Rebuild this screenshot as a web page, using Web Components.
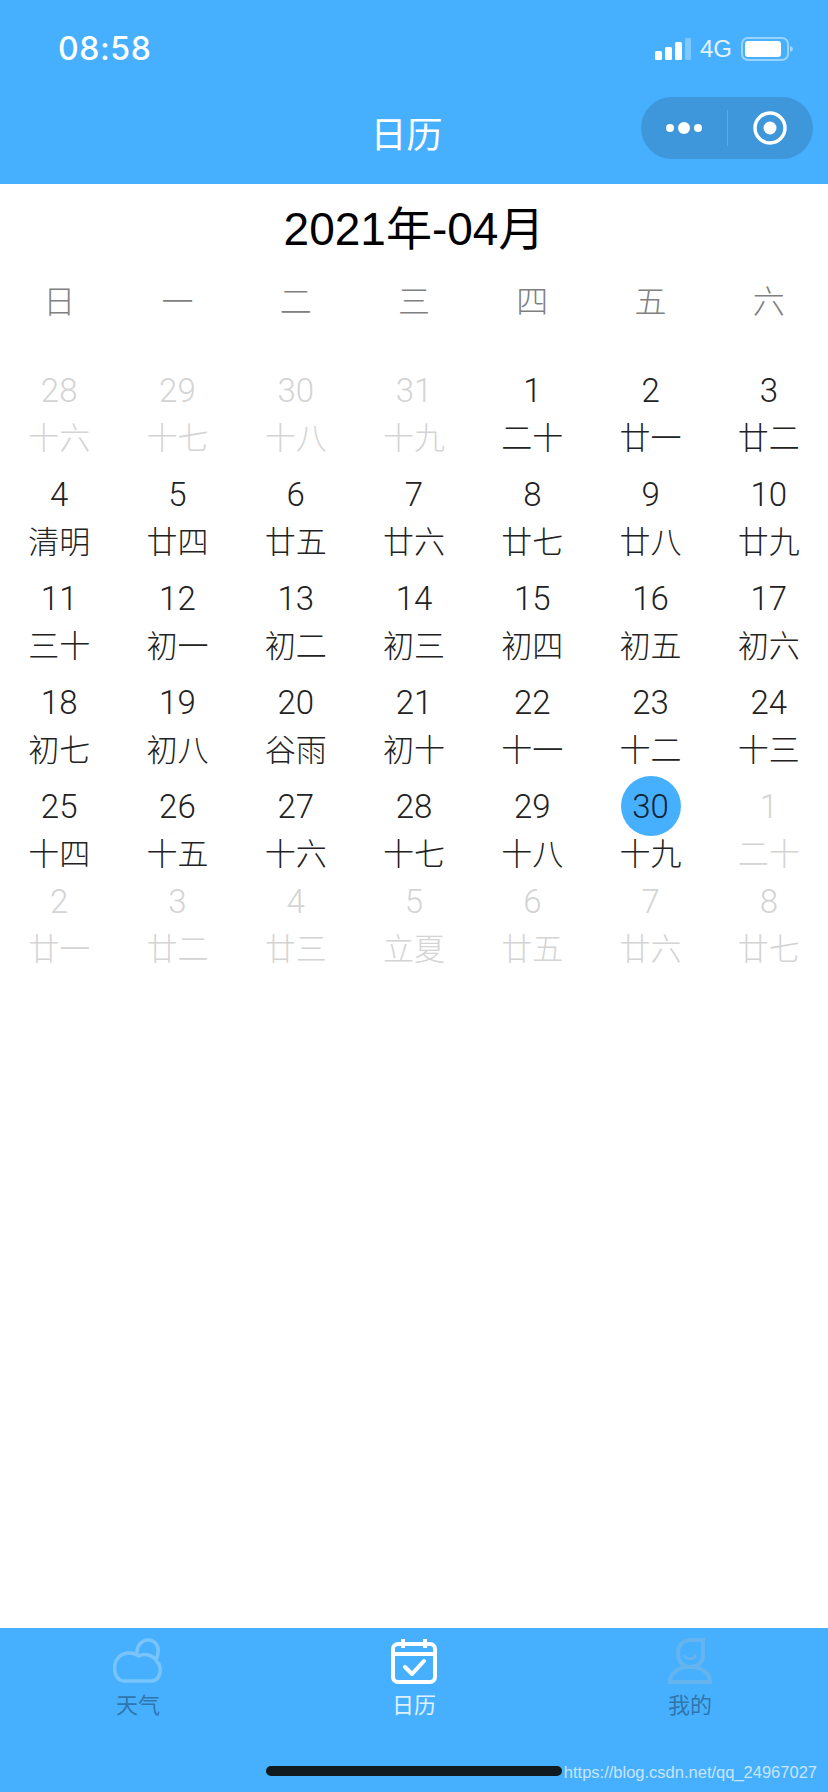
<!DOCTYPE html>
<html lang="zh">
<head>
<meta charset="utf-8">
<title>日历</title>
<style>
  html, body { margin: 0; height: 100%; }
  body { font-family: "Noto Sans CJK SC", sans-serif; background: #fff; }
</style>
</head>
<body>
<calendar-app></calendar-app>

<script>
// top part: status bar + nav title + wechat capsule
class TopBar extends HTMLElement {
  connectedCallback() {
    const shadow = this.attachShadow({ mode: "open" });
    shadow.innerHTML = `
      <style>
        :host { display: block; background: #47b0fe; color: #fff; height: 184px; }
        .status { height: 98px; display: flex; align-items: center; justify-content: space-between; padding: 0 35px 0 58px; box-sizing: border-box; }
        .time { font: 500 32px/1 Inter, "Liberation Sans", sans-serif; letter-spacing: 0.6px; }
        .right { display: flex; align-items: center; gap: 9px; }
        .net { font: 24px/1 "Liberation Sans", sans-serif; opacity: .85; }
        .nav { height: 86px; display: grid; grid-template-columns: 1fr auto 1fr; align-items: center; padding-right: 15px; }
        .title { grid-column: 2; font: 36px/1 "Noto Sans CJK SC", sans-serif; padding-bottom: 18px; }
        .capsule { grid-column: 3; justify-self: end; margin-top: -26px; width: 172px; height: 62px; border-radius: 31px; background: #3e96db; display: flex; align-items: center; }
        .capsule > div { flex: 1; display: flex; justify-content: center; align-items: center; height: 36px; }
        .capsule > div:first-child { border-right: 1px solid #5aa8e6; }
      </style>
      <div class="status">
        <span class="time">08:58</span>
        <div class="right">
          <svg width="36" height="24" viewBox="0 0 36 24">
            <rect x="0" y="14" width="7" height="9" rx="1.5" fill="#fff"/>
            <rect x="10" y="10" width="7" height="13" rx="1.5" fill="#fff"/>
            <rect x="20" y="5" width="7" height="18" rx="1.5" fill="#fff"/>
            <rect x="30" y="1" width="6" height="22" rx="1.5" fill="#fff" opacity=".3"/>
          </svg>
          <span class="net">4G</span>
          <svg width="52" height="26" viewBox="0 0 52 26">
            <rect x="1" y="2" width="46" height="22" rx="6" fill="none" stroke="#fff" stroke-opacity=".45" stroke-width="2"/>
            <rect x="4" y="5" width="36" height="16" rx="3" fill="#fff"/>
            <path d="M49 10 q3 1 3 3 t-3 3z" fill="#fff" fill-opacity=".5"/>
          </svg>
        </div>
      </div>
      <div class="nav">
        <span class="title">日历</span>
        <div class="capsule">
          <div>
            <svg width="38" height="14" viewBox="0 0 38 14" fill="#fff">
              <circle cx="5" cy="7" r="4"/><circle cx="19" cy="7" r="6"/><circle cx="33" cy="7" r="4"/>
            </svg>
          </div>
          <div>
            <svg width="34" height="34" viewBox="0 0 34 34">
              <circle cx="17" cy="17" r="15" fill="none" stroke="#fff" stroke-width="3.5"/>
              <circle cx="17" cy="17" r="6.5" fill="#fff"/>
            </svg>
          </div>
        </div>
      </div>`;
  }
}

// single day cell, number + lunar text
class DayCell extends HTMLElement {
  connectedCallback() {
    const shadow = this.attachShadow({ mode: "open" });
    shadow.innerHTML = `
      <style>
        :host { display: flex; flex-direction: column; align-items: center; color: #222; }
        :host([muted]) { color: #d4d4d4; }
        :host([tight]) { margin-top: -9px; }
        .num { width: 60px; height: 60px; border-radius: 50%; display: flex; align-items: center; justify-content: center;
               font: 300 33px/1 Roboto, "Liberation Sans", sans-serif; }
        :host([today]) .num { background: #47b0fe; color: #123; }
        .lunar { font: 300 31px/32px "Noto Sans CJK SC", sans-serif; height: 32px; white-space: nowrap; }
      </style>
      <div class="num">${this.getAttribute("num")}</div>
      <div class="lunar">${this.getAttribute("lunar")}</div>`;
  }
}

class MonthView extends HTMLElement {
  connectedCallback() {
    const shadow = this.attachShadow({ mode: "open" });
    const weeks = ["日", "一", "二", "三", "四", "五", "六"];
    const days = [
      [28, "十六", 1], [29, "十七", 1], [30, "十八", 1], [31, "十九", 1], [1, "二十"], [2, "廿一"], [3, "廿二"],
      [4, "清明"], [5, "廿四"], [6, "廿五"], [7, "廿六"], [8, "廿七"], [9, "廿八"], [10, "廿九"],
      [11, "三十"], [12, "初一"], [13, "初二"], [14, "初三"], [15, "初四"], [16, "初五"], [17, "初六"],
      [18, "初七"], [19, "初八"], [20, "谷雨"], [21, "初十"], [22, "十一"], [23, "十二"], [24, "十三"],
      [25, "十四"], [26, "十五"], [27, "十六"], [28, "十七"], [29, "十八"], [30, "十九"], [1, "二十", 1],
      [2, "廿一", 1], [3, "廿二", 1], [4, "廿三", 1], [5, "立夏", 1], [6, "廿五", 1], [7, "廿六", 1], [8, "廿七", 1],
    ];
    const cells = days.map((d, i) => {
      const today = i === 33 ? "today" : "";
      const tight = i >= 35 ? "tight" : "";
      return `<day-cell num="${d[0]}" lunar="${d[1]}" ${d[2] ? "muted" : ""} ${today} ${tight}></day-cell>`;
    }).join("");
    shadow.innerHTML = `
      <style>
        :host { display: block; flex: 1; background: #fff; }
        h1 { margin: 0; height: 90px; font: 400 46px/90px "Liberation Sans", "Noto Sans CJK SC", sans-serif; color: #000; text-align: center; }
        .week, .days { display: grid; grid-template-columns: repeat(7, 1fr); justify-items: center; }
        .week { height: 50px; font: 300 32px/50px "Noto Sans CJK SC", sans-serif; color: #808080; }
        .days { margin-top: 36px; row-gap: 12px; }
      </style>
      <h1>2021年-04月</h1>
      <div class="week">${weeks.map(w => `<span>${w}</span>`).join("")}</div>
      <div class="days">${cells}</div>`;
  }
}

// one tab, icon goes in the slot
class TabItem extends HTMLElement {
  connectedCallback() {
    const shadow = this.attachShadow({ mode: "open" });
    shadow.innerHTML = `
      <style>
        :host { display: flex; flex-direction: column; align-items: center; padding-top: 10px; color: #2f76ad; }
        :host([active]) { color: #dff1ff; }
        .icon { height: 46px; display: flex; align-items: center; }
        .label { font: 22px/30px "Noto Sans CJK SC", sans-serif; margin-top: 4px; }
      </style>
      <div class="icon"><slot></slot></div>
      <div class="label">${this.getAttribute("label")}</div>`;
  }
}

class TabBar extends HTMLElement {
  connectedCallback() {
    const shadow = this.attachShadow({ mode: "open" });
    shadow.innerHTML = `
      <style>
        :host { display: grid; grid-template-columns: repeat(3, 1fr); height: 164px; background: #47b0fe; position: relative; }
        .home { position: absolute; left: 266px; top: 138px; width: 296px; height: 10px; border-radius: 5px; background: #111a1f; }
        .mark { position: absolute; right: 11px; top: 134px; font: 16.5px/20px "Liberation Sans", sans-serif; color: rgba(255,255,255,.7); }
      </style>
      <tab-item label="天气">
        <svg width="50" height="46" viewBox="0 0 50 46" fill="none" stroke="#78c4fb" stroke-width="3.5">
          <path d="M12 43 C4 43 1.500 36 1.500 30 C1.500 21 8 15 16 15 C20 15 23 16 26 18 C32 15 41 17 44 24 C49 27 49 43 38 43 Z"/>
          <path d="M24 16 C23 8 29 2 35 2 C42 2 46 8 45 14 C45 18 43 21 42 22"/>
        </svg>
      </tab-item>
      <tab-item label="日历" active>
        <svg width="46" height="46" viewBox="0 0 46 46" fill="none" stroke="#fff" stroke-width="4">
          <rect x="2" y="6" width="42" height="38" rx="5"/>
          <path d="M2 16 H44 M12 1 V10 M34 1 V10"/>
          <path d="M14 29 L21 36 L33 23" stroke-linecap="round" stroke-linejoin="round"/>
        </svg>
      </tab-item>
      <tab-item label="我的">
        <svg width="44" height="46" viewBox="0 0 44 46" fill="none" stroke="#65b4ee" stroke-width="4">
          <path d="M10 15 C10 6 16 2 24 2 H35 V17 C35 25 29 29 22 29 C15 29 10 24 10 15 Z"/>
          <path d="M2 44 C2 36 9 31 16 29 H28 C35 31 42 36 42 44 Z"/>
          <path d="M16 17 C18 22 26 22 28 17" stroke-width="2.5"/>
        </svg>
      </tab-item>
      <div class="home"></div>
      <div class="mark">https://blog.csdn.net/qq_24967027</div>`;
  }
}

class CalendarApp extends HTMLElement {
  connectedCallback() {
    const shadow = this.attachShadow({ mode: "open" });
    shadow.innerHTML = `
      <style>
        :host { display: flex; flex-direction: column; height: 1792px; }
      </style>
      <top-bar></top-bar>
      <month-view></month-view>
      <tab-bar></tab-bar>`;
  }
}

customElements.define("top-bar", TopBar);
customElements.define("day-cell", DayCell);
customElements.define("month-view", MonthView);
customElements.define("tab-item", TabItem);
customElements.define("tab-bar", TabBar);
customElements.define("calendar-app", CalendarApp);
</script>
</body>
</html>
